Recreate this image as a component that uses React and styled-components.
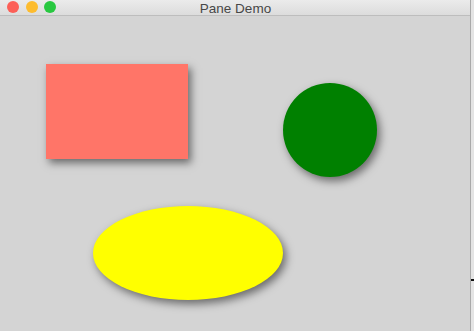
import React from 'react';
import styled, { createGlobalStyle } from 'styled-components';

const Global = createGlobalStyle`
  html, body {
    margin: 0;
    padding: 0;
    background: #e9e9e9;
    overflow: hidden;
  }
`;

const Screen = styled.div`
  display: flex;
  width: 474px;
  height: 331px;
`;

const Window = styled.div`
  display: flex;
  flex-direction: column;
  width: 470px;
  height: 331px;
  border-right: 1px solid #a9a9a9;
  background: #d4d4d4;
`;

const TitleBar = styled.div`
  position: relative;
  display: flex;
  align-items: center;
  justify-content: center;
  height: 15px;
  flex: none;
  background: linear-gradient(#ebebeb, #dcdcdc);
  border-bottom: 1px solid #bdbdbd;
  font-family: "Liberation Sans", Arial, sans-serif;
  font-size: 13.5px;
  color: #474747;
`;

const Lights = styled.div`
  position: absolute;
  left: 7px;
  top: 1px;
  display: flex;
  gap: 6.5px;
`;

const Light = styled.span`
  width: 12px;
  height: 12px;
  border-radius: 50%;
  background: ${p => p.$color};
`;

const Title = styled.span`
  margin-left: 1px;
  margin-top: 1px;
`;

const Pane = styled.div`
  position: relative;
  flex: 1;
`;

const Shape = styled.div`
  position: absolute;
  left: ${p => p.$x}px;
  top: ${p => p.$y}px;
  width: ${p => p.$w}px;
  height: ${p => p.$h}px;
  background: ${p => p.$color};
  border-radius: ${p => (p.$round ? '50%' : '0')};
  box-shadow: 3px 4px 8px rgba(0, 0, 0, 0.5);
`;

const Edge = styled.div`
  position: relative;
  flex: 1;
  background: #e4e4e4;
`;

const Tick = styled.span`
  position: absolute;
  left: 0;
  top: 279px;
  width: 3px;
  height: 2px;
  background: #111;
`;

export default function App() {
  return (
    <Screen>
      <Global />
      <Window>
        <TitleBar>
          <Lights>
            <Light $color="#fc5f57" />
            <Light $color="#fdbc2e" />
            <Light $color="#28c840" />
          </Lights>
          <Title>Pane Demo</Title>
        </TitleBar>
        <Pane>
          <Shape $x={46} $y={48} $w={142} $h={95} $color="#ff7568" />
          <Shape $x={283} $y={67} $w={94} $h={94} $color="#008000" $round />
          <Shape $x={93} $y={190} $w={190} $h={94} $color="#ffff00" $round />
        </Pane>
      </Window>
      <Edge>
        <Tick />
      </Edge>
    </Screen>
  );
}
